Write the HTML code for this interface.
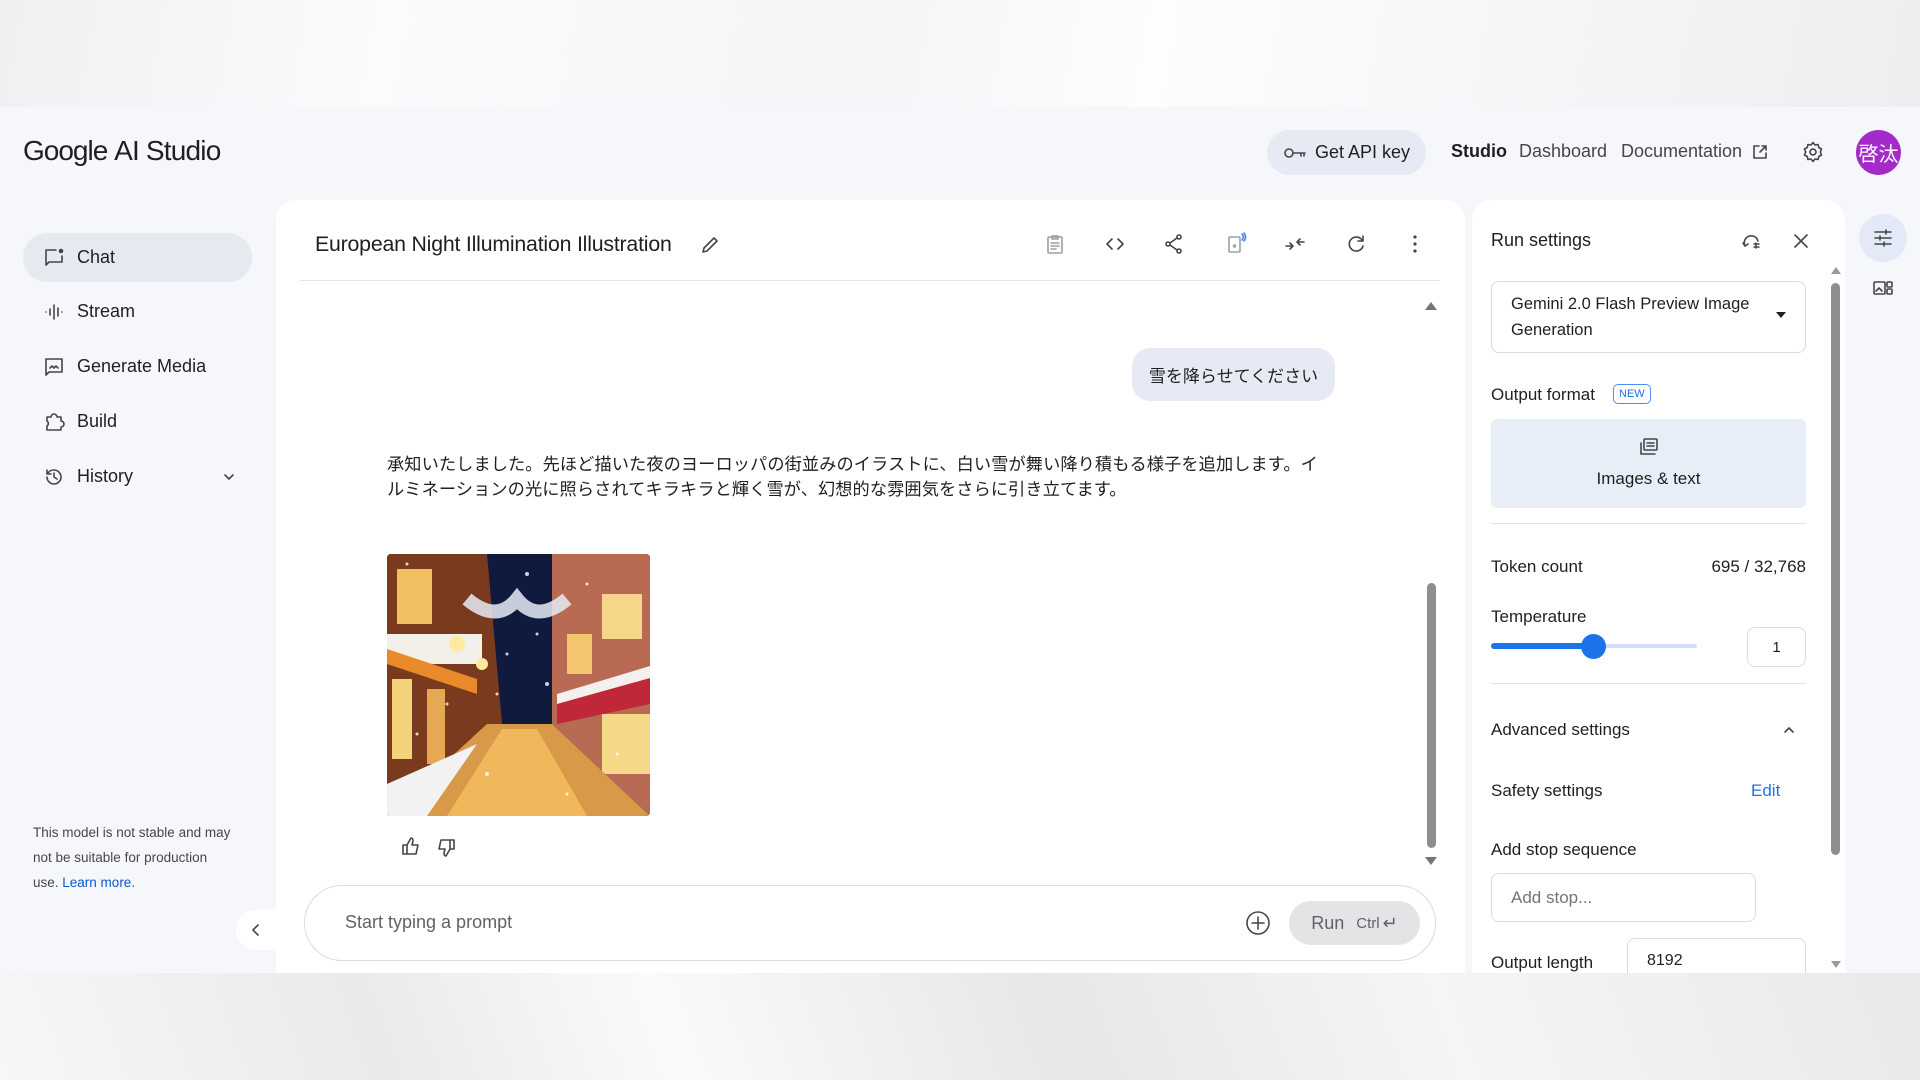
<!DOCTYPE html>
<html><head><meta charset="utf-8">
<style>
*{box-sizing:border-box;margin:0;padding:0}
body{width:1920px;height:1080px;position:relative;overflow:hidden;font-family:"Liberation Sans","Noto Sans CJK JP",sans-serif;color:#1f1f1f;background:#f1f2f4}
.a{position:absolute}
.bgtop{left:0;top:0;width:1920px;height:107px;background:linear-gradient(100deg,#eef0f2 0%,#fbfbfc 20%,#f4f5f7 45%,#fdfdfd 60%,#eceef0 100%)}
.bgbot{left:0;top:973px;width:1920px;height:107px;background:linear-gradient(70deg,#f7f7f8 0%,#e9eaec 20%,#fafafa 35%,#e6e7e9 55%,#f5f5f6 75%,#e8e9eb 100%)}
.app{left:0;top:107px;width:1920px;height:866px;background:#f6f7fb}
.ico{stroke:#444746;fill:none;stroke-width:1.6;stroke-linecap:round;stroke-linejoin:round}
.nav{left:23px;width:229px;height:49px;border-radius:25px;display:flex;align-items:center;padding-left:20px;font-size:18px;color:#1f1f1f}
.nav svg{margin-right:12px}
.panel{background:#fff;border-radius:20px 20px 0 0}
</style></head><body>
<div class="a bgtop"></div>
<div class="a app"></div>

<!-- header -->
<div class="a" style="left:23px;top:135px;font-size:28px;letter-spacing:-1px;color:#1f1f1f"><span style="font-weight:500">Google</span> <span style="letter-spacing:-0.8px">AI Studio</span></div>
<div class="a" style="left:1267px;top:130px;width:159px;height:45px;border-radius:23px;background:#e6eaf4;display:flex;align-items:center;justify-content:center;font-size:18px;font-weight:500">
<svg width="24" height="16" viewBox="0 0 24 16" class="ico" style="margin-right:8px"><circle cx="6" cy="8" r="4"/><path d="M10 8h12M18 8v3M21 8v3"/></svg>Get API key</div>
<div class="a" style="left:1451px;top:141px;font-size:18px;font-weight:700">Studio</div>
<div class="a" style="left:1519px;top:141px;font-size:18px;color:#444746">Dashboard</div>
<div class="a" style="left:1621px;top:141px;font-size:18px;color:#444746">Documentation</div>
<svg class="a ico" style="left:1752px;top:144px" width="16" height="16" viewBox="0 0 16 16"><path d="M7 2H2v12h12V9M10 2h4v4M14 2L8 8"/></svg>
<svg class="a ico" style="left:1801px;top:140px" width="24" height="24" viewBox="0 0 24 24"><circle cx="12" cy="12" r="3"/><path d="M12 2.5l2 2.5 3-.5.8 3 2.7 1.5-1.2 3 1.2 3-2.7 1.5-.8 3-3-.5-2 2.5-2-2.5-3 .5-.8-3L3.5 15l1.2-3-1.2-3 2.7-1.5.8-3 3 .5z"/></svg>
<div class="a" style="left:1856px;top:130px;width:45px;height:45px;border-radius:50%;background:#a52bc9;color:#fff;font-size:20px;display:flex;align-items:center;justify-content:center">啓汰</div>

<!-- sidebar -->
<div class="a nav" style="top:233px;background:#e7e9f1;font-weight:500"><svg width="22" height="22" viewBox="0 0 22 22" class="ico"><path d="M13 3H3v15l3-3h13V9"/><circle cx="18" cy="4" r="1.5" fill="#444746"/></svg>Chat</div>
<div class="a nav" style="top:287px"><svg width="22" height="22" viewBox="0 0 22 22" class="ico"><path d="M3 11h0M7 8v6M11 4v14M15 7v8M19 11h0"/></svg>Stream</div>
<div class="a nav" style="top:342px"><svg width="22" height="22" viewBox="0 0 22 22" class="ico"><path d="M3 3h16v13H6l-3 3z M7 12l2-2 2 2 2-2 2 2"/></svg>Generate Media</div>
<div class="a nav" style="top:397px"><svg width="22" height="22" viewBox="0 0 22 22" class="ico"><path d="M4 6h4a3 3 0 016 0h4v4a3 3 0 010 6v3H4v-4a3 3 0 000-5z"/></svg>Build</div>
<div class="a nav" style="top:452px"><svg width="22" height="22" viewBox="0 0 22 22" class="ico"><path d="M4 11a7 7 0 107-7 7 7 0 00-6 3M4 4v4h4M11 7v4l3 2"/></svg>History<svg style="position:absolute;left:198px" width="16" height="16" viewBox="0 0 16 16" class="ico"><path d="M4 6l4 4 4-4"/></svg></div>
<div class="a" style="left:33px;top:820px;width:200px;font-size:13.5px;line-height:25px;color:#444746">This model is not stable and may not be suitable for production use. <span style="color:#0b57d0;font-weight:500">Learn more.</span></div>
<div class="a" style="left:236px;top:910px;width:40px;height:40px;border-radius:20px 0 0 20px;background:#fff"></div>
<svg class="a ico" style="left:248px;top:922px" width="16" height="16" viewBox="0 0 16 16"><path d="M10 3L5 8l5 5"/></svg>

<!-- main panel -->
<div class="a panel" style="left:276px;top:200px;width:1189px;height:773px"></div>
<div class="a" style="left:315px;top:232px;font-size:21.3px;font-weight:500;letter-spacing:-0.2px">European Night Illumination Illustration</div>
<svg class="a ico" style="left:699px;top:234px" width="22" height="22" viewBox="0 0 22 22"><path d="M4 18l1-4L15 4l3 3L8 17z"/></svg>
<div class="a" style="left:300px;top:280px;width:1140px;height:1px;background:#e3e3e3"></div>
<svg class="a ico" style="left:1044px;top:233px;stroke:#9aa0a6" width="22" height="22" viewBox="0 0 22 22"><rect x="4" y="4" width="14" height="16" rx="1"/><path d="M8 3h6v3H8zM7 10h8M7 13h8M7 16h5"/></svg>
<svg class="a ico" style="left:1104px;top:233px" width="22" height="22" viewBox="0 0 22 22"><path d="M8 6l-5 5 5 5M14 6l5 5-5 5"/></svg>
<svg class="a ico" style="left:1163px;top:233px" width="22" height="22" viewBox="0 0 22 22"><circle cx="16" cy="4" r="2"/><circle cx="5" cy="11" r="2"/><circle cx="16" cy="18" r="2"/><path d="M7 10l7-5M7 12l7 5"/></svg>
<svg class="a ico" style="left:1225px;top:231px;stroke:#9aa0a6" width="24" height="24" viewBox="0 0 24 24"><rect x="4" y="6" width="11" height="15" rx="1"/><circle cx="9.5" cy="15" r="1"/><path d="M17 3a4 4 0 010 6M19 2a6 6 0 010 8" style="stroke:#4285f4"/></svg>
<svg class="a ico" style="left:1284px;top:233px" width="22" height="22" viewBox="0 0 22 22"><path d="M2 13h7l-3-3M9 13l-3 3M20 9h-7l3-3M13 9l3 3"/></svg>
<svg class="a ico" style="left:1345px;top:233px" width="22" height="22" viewBox="0 0 22 22"><path d="M17 7a7 7 0 101 6M18 3v5h-5"/></svg>
<svg class="a" style="left:1404px;top:233px" width="22" height="22" viewBox="0 0 22 22" fill="#444746"><circle cx="11" cy="4" r="1.6"/><circle cx="11" cy="11" r="1.6"/><circle cx="11" cy="18" r="1.6"/></svg>

<svg class="a" style="left:1424px;top:300px" width="14" height="12" viewBox="0 0 14 12"><path d="M1 10L7 2l6 8z" fill="#757575"/></svg>
<div class="a" style="left:1427px;top:583px;width:9px;height:265px;border-radius:5px;background:#8e8e8e"></div>
<svg class="a" style="left:1424px;top:855px" width="14" height="12" viewBox="0 0 14 12"><path d="M1 2l6 8 6-8z" fill="#757575"/></svg>

<div class="a" style="left:1132px;top:348px;width:203px;height:53px;border-radius:18px;background:#e6eaf4;display:flex;align-items:center;justify-content:center;font-size:17px">雪を降らせてください</div>
<div class="a" style="left:387px;top:452px;width:946px;font-size:17.2px;line-height:25px;color:#1f1f1f;letter-spacing:0.1px">承知いたしました。先ほど描いた夜のヨーロッパの街並みのイラストに、白い雪が舞い降り積もる様子を追加します。イルミネーションの光に照らされてキラキラと輝く雪が、幻想的な雰囲気をさらに引き立てます。</div>

<svg class="a" style="left:387px;top:554px;border-radius:4px" width="263" height="262" viewBox="0 0 263 262">
<rect width="263" height="262" fill="#16234a"/>
<polygon points="90,0 180,0 165,170 100,170" fill="#0f1a3d"/>
<polygon points="0,0 100,0 115,170 90,262 0,262" fill="#7a3a1e"/>
<rect x="10" y="15" width="35" height="55" fill="#f0c060"/>
<rect x="0" y="80" width="95" height="30" fill="#f3f0ea"/>
<polygon points="0,95 90,125 90,140 0,110" fill="#e88a2a"/>
<rect x="5" y="125" width="20" height="80" fill="#f4d27a"/>
<rect x="40" y="135" width="18" height="75" fill="#e6a852"/>
<polygon points="165,0 263,0 263,262 165,170" fill="#b86a52"/>
<rect x="215" y="40" width="40" height="45" fill="#f6d78a"/>
<rect x="180" y="80" width="25" height="40" fill="#f3c56e"/>
<polygon points="170,145 263,120 263,150 170,170" fill="#c0283a"/>
<polygon points="170,140 263,112 263,124 170,150" fill="#f4f0ee"/>
<rect x="215" y="160" width="48" height="60" fill="#f5d888"/>
<polygon points="100,170 165,170 263,262 0,262" fill="#d89a48"/>
<polygon points="115,175 150,175 200,262 60,262" fill="#f0b85a"/>
<polygon points="0,262 0,230 90,190 40,262" fill="#f2f2f2"/>
<path d="M80,45 Q110,70 130,45 Q150,70 180,45" stroke="#e6ecf5" stroke-width="14" fill="none" opacity=".85"/>
<circle cx="70" cy="90" r="8" fill="#ffe9a0"/><circle cx="95" cy="110" r="6" fill="#ffe9a0"/>
<g fill="#fff" opacity=".8"><circle cx="20" cy="10" r="1.5"/><circle cx="140" cy="20" r="2"/><circle cx="120" cy="100" r="1.5"/><circle cx="200" cy="30" r="1.5"/><circle cx="60" cy="150" r="1.5"/><circle cx="160" cy="130" r="2"/><circle cx="230" cy="200" r="1.5"/><circle cx="100" cy="220" r="2"/><circle cx="30" cy="180" r="1.5"/><circle cx="180" cy="240" r="1.5"/><circle cx="150" cy="80" r="1.5"/><circle cx="110" cy="140" r="1.5"/></g>
</svg>
<svg class="a ico" style="left:400px;top:835px" width="22" height="22" viewBox="0 0 22 22"><path d="M3 10h4v9H3zM7 10l4-7c2 0 2 2 2 3l-1 4h6l-2 9H7"/></svg>
<svg class="a ico" style="left:435px;top:837px" width="22" height="22" viewBox="0 0 22 22"><path d="M19 12h-4V3h4zM15 12l-4 7c-2 0-2-2-2-3l1-4H4l2-9h9"/></svg>

<div class="a" style="left:304px;top:885px;width:1132px;height:76px;border:1px solid #dadce0;border-radius:38px;background:#fff"></div>
<div class="a" style="left:345px;top:912px;font-size:18px;color:#5f6368">Start typing a prompt</div>
<svg class="a ico" style="left:1245px;top:910px" width="26" height="26" viewBox="0 0 26 26"><circle cx="13" cy="13" r="11"/><path d="M13 7v12M7 13h12"/></svg>
<div class="a" style="left:1289px;top:901px;width:131px;height:44px;border-radius:22px;background:#e4e4e6;display:flex;align-items:center;justify-content:center;font-size:18px;color:#5f6368">Run <span style="font-size:15px;margin-left:12px">Ctrl</span><span style="margin-left:3px;font-size:18px">↵</span></div>

<!-- run settings -->
<div class="a panel" style="left:1472px;top:200px;width:373px;height:773px"></div>
<div class="a" style="left:1491px;top:230px;font-size:18px;font-weight:500">Run settings</div>
<svg class="a ico" style="left:1740px;top:230px" width="22" height="22" viewBox="0 0 22 22"><path d="M5 16A7 7 0 1118 11M3 13l2 3 3-2M14 14h5M14 17h5M16 13v5"/></svg>
<svg class="a ico" style="left:1790px;top:230px" width="22" height="22" viewBox="0 0 22 22"><path d="M5 5l12 12M17 5L5 17"/></svg>
<div class="a" style="left:1491px;top:281px;width:315px;height:72px;border:1px solid #dadce0;border-radius:8px;padding:9px 40px 0 19px;font-size:16.5px;line-height:26px">Gemini 2.0 Flash Preview Image Generation</div>
<svg class="a" style="left:1774px;top:310px" width="14" height="10" viewBox="0 0 14 10"><path d="M2 2l5 6 5-6z" fill="#1f1f1f"/></svg>
<div class="a" style="left:1491px;top:385px;font-size:17px">Output format</div>
<div class="a" style="left:1613px;top:384px;border:1.5px solid #4c8df6;border-radius:5px;color:#1a73e8;font-size:11px;padding:3px 5px;font-weight:500">NEW</div>
<div class="a" style="left:1491px;top:419px;width:315px;height:89px;border-radius:6px;background:#e8eef7"></div>
<svg class="a ico" style="left:1638px;top:435px" width="22" height="22" viewBox="0 0 22 22"><path d="M3 8v11h14"/><rect x="6" y="4" width="13" height="11" rx="1"/><path d="M9 8h7M9 11h7"/></svg>
<div class="a" style="left:1491px;top:469px;width:315px;text-align:center;font-size:17px">Images &amp; text</div>
<div class="a" style="left:1491px;top:523px;width:315px;height:1px;background:#e3e3e3"></div>
<div class="a" style="left:1491px;top:557px;font-size:17px">Token count</div>
<div class="a" style="left:1806px;top:557px;font-size:17px;transform:translateX(-100%)">695 / 32,768</div>
<div class="a" style="left:1491px;top:607px;font-size:17px">Temperature</div>
<div class="a" style="left:1491px;top:644px;width:206px;height:4px;border-radius:2px;background:#cfdff8"></div>
<div class="a" style="left:1491px;top:643px;width:102px;height:6px;border-radius:3px;background:#1a73e8"></div>
<div class="a" style="left:1581px;top:634px;width:25px;height:25px;border-radius:50%;background:#1a73e8"></div>
<div class="a" style="left:1747px;top:627px;width:59px;height:40px;border:1px solid #dadce0;border-radius:8px;display:flex;align-items:center;justify-content:center;font-size:15px">1</div>
<div class="a" style="left:1491px;top:683px;width:315px;height:1px;background:#e3e3e3"></div>
<div class="a" style="left:1491px;top:720px;font-size:17px">Advanced settings</div>
<svg class="a ico" style="left:1781px;top:722px" width="16" height="16" viewBox="0 0 16 16"><path d="M4 10l4-4 4 4"/></svg>
<div class="a" style="left:1491px;top:781px;font-size:17px">Safety settings</div>
<div class="a" style="left:1751px;top:781px;font-size:17px;color:#1a73e8">Edit</div>
<div class="a" style="left:1491px;top:840px;font-size:17px">Add stop sequence</div>
<div class="a" style="left:1491px;top:873px;width:265px;height:49px;border:1px solid #dadce0;border-radius:8px;padding:14px 0 0 19px;font-size:17px;color:#757575">Add stop...</div>
<div class="a" style="left:1491px;top:953px;font-size:17px">Output length</div>
<div class="a" style="left:1627px;top:938px;width:179px;height:40px;border:1px solid #dadce0;border-bottom:none;border-radius:8px 8px 0 0;padding:13px 0 0 19px;font-size:16px">8192</div>
<svg class="a" style="left:1830px;top:265px" width="12" height="10" viewBox="0 0 12 10"><path d="M1 9L6 2l5 7z" fill="#9a9a9a"/></svg>
<div class="a" style="left:1831px;top:283px;width:9px;height:572px;border-radius:5px;background:#8e8e8e"></div>
<svg class="a" style="left:1830px;top:960px" width="12" height="10" viewBox="0 0 12 10"><path d="M1 1l5 7 5-7z" fill="#9a9a9a"/></svg>
<div class="a" style="left:1845px;top:200px;width:75px;height:773px;background:#f6f7fb"></div>
<div class="a" style="left:1859px;top:214px;width:48px;height:48px;border-radius:50%;background:#e3e9f6"></div>
<svg class="a ico" style="left:1872px;top:227px" width="22" height="22" viewBox="0 0 22 22"><path d="M3 5h16M3 11h16M3 17h16M14 3v4M8 9v4M12 15v4"/></svg>
<svg class="a ico" style="left:1872px;top:277px" width="22" height="22" viewBox="0 0 22 22"><rect x="2" y="5" width="11" height="12" rx="1"/><path d="M4 14l3-3 3 3"/><rect x="15" y="5" width="5" height="5" rx="1"/><rect x="15" y="12" width="5" height="5" rx="1"/></svg>
<div class="a bgbot"></div>
</body></html>
